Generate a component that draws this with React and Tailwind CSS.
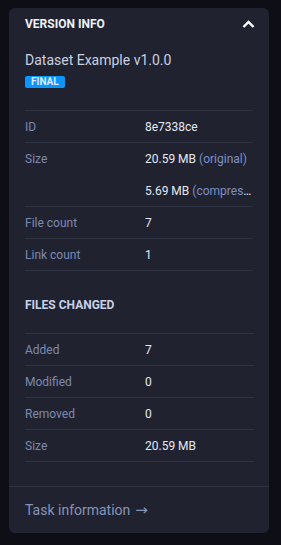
import React from 'react'

const Row = ({ label, children }) => (
  <div className="flex h-8 items-center border-b border-[#2f3342]">
    <div className="w-[120px] shrink-0 text-[#7d89b2]">{label}</div>
    <div className="min-w-0 flex-1 truncate text-[#e4e8f4]">{children}</div>
  </div>
)

const App = () => {
  return (
    <div className="min-h-[545px] bg-[#0e0f16] pt-2 pl-[9px]" style={{ fontFamily: 'Roboto, "Noto Sans", sans-serif' }}>
      <div className="w-[260px] h-[525px] rounded-md bg-[#20232f] flex flex-col">
        <div className="flex h-8 items-center justify-between pl-4 pr-[14px]">
          <span className="text-[12px] font-bold text-[#eef1f8]">VERSION INFO</span>
          <svg width="13" height="9" viewBox="0 0 13 9" fill="none">
            <path d="M1.5 7L6.5 2L11.5 7" stroke="#ffffff" strokeWidth="2.4" />
          </svg>
        </div>

        <div className="flex-1 px-4 text-[12px]">
          <div className="mt-[10px] text-[14px] leading-5 text-[#c9d0e4]">Dataset Example v1.0.0</div>
          <div className="mt-[6px] inline-block rounded-[2px] bg-[#0b96ff] px-[6px] text-[10px] font-bold leading-[12px] text-[#dcebff]">
            FINAL
          </div>

          <div className="mt-[20px] border-t border-[#2f3342]">
            <Row label="ID">8e7338ce</Row>
            <div className="border-b border-[#2f3342]">
              <div className="flex h-8 items-center">
                <div className="w-[120px] shrink-0 text-[#7d89b2]">Size</div>
                <div className="min-w-0 flex-1 truncate text-[#e4e8f4]">
                  20.59 MB <span className="text-[#7f8fc4]">(original)</span>
                </div>
              </div>
              <div className="flex h-[31px] items-center">
                <div className="w-[120px] shrink-0" />
                <div className="min-w-0 flex-1 truncate text-[#e4e8f4]">
                  5.69 MB <span className="text-[#7f8fc4]">(compressed)</span>
                </div>
              </div>
            </div>
            <Row label="File count">7</Row>
            <Row label="Link count">1</Row>
          </div>

          <div className="mt-[26px] mb-[20px] text-[12px] font-bold leading-4 text-[#c7d0ec]">FILES CHANGED</div>

          <div className="border-t border-[#2f3342]">
            <Row label="Added">7</Row>
            <Row label="Modified">0</Row>
            <Row label="Removed">0</Row>
            <Row label="Size">20.59 MB</Row>
          </div>
        </div>

        <div className="flex h-[47px] items-center border-t border-[#2f3342] px-4 text-[14px] text-[#8693bb]">
          Task information
          <span className="ml-[5px] text-[15px] leading-none" style={{ fontFamily: '"DejaVu Sans", sans-serif' }}>→</span>
        </div>
      </div>
    </div>
  )
}

export default App
